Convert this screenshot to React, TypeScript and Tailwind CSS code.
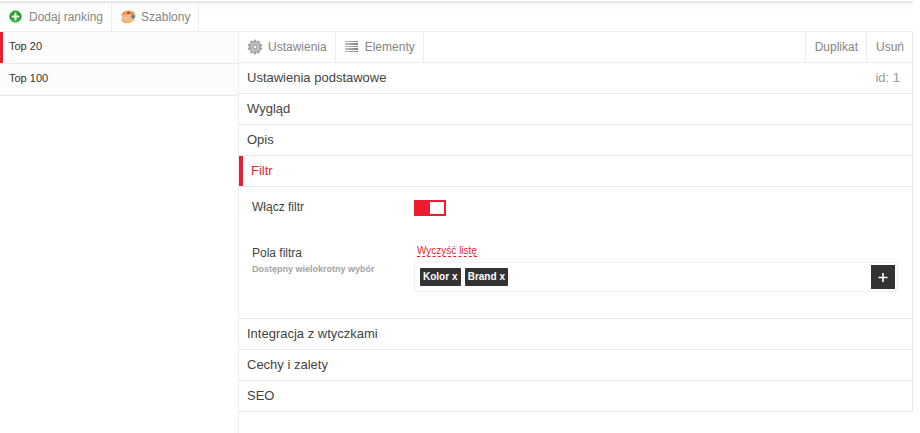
import React from 'react';

const rankings = ['Top 20', 'Top 100'];
const topSections = ['Ustawienia podstawowe', 'Wygląd', 'Opis'];
const bottomSections = ['Integracja z wtyczkami', 'Cechy i zalety', 'SEO'];

const AddIcon = () => (
  <svg className="h-4 w-4" viewBox="0 0 16 16" aria-hidden="true">
    <defs>
      <linearGradient id="add-fill" x1="0" y1="0" x2="0" y2="1">
        <stop offset="0" stopColor="#2ea83a" />
        <stop offset="0.5" stopColor="#149a22" />
        <stop offset="1" stopColor="#35c233" />
      </linearGradient>
    </defs>
    <circle cx="7.5" cy="7.5" r="5.800" fill="url(#add-fill)" stroke="#3f9b45" strokeWidth="0.7" />
    <path d="M7.5 4.500v6M4.500 7.500h6" stroke="#fff" strokeWidth="2" strokeLinecap="round" />
  </svg>
);

const PaletteIcon = () => (
  <svg className="h-4 w-4" viewBox="0 0 16 16" aria-hidden="true">
    <path
      d="M2 4.6C3.6 2 8.6 1.3 12 2.5c3 1.1 3.6 4.3 2.4 6.8-1.3 2.8-4.2 4.5-7.4 4.5-3.2 0-5.3-1.6-5.2-3.4.1-1.3 1.5-1.5 1.3-2.5C2.9 6.8.9 6.5 2 4.6z"
      fill="#f5b77c"
      stroke="#d4884f"
      strokeWidth="0.7"
    />
    <circle cx="6" cy="9.4" r="1.3" fill="#fff" stroke="#c98250" strokeWidth="0.5" />
    <ellipse cx="4.7" cy="4.8" rx="1.6" ry="1.2" fill="#f08a2c" />
    <ellipse cx="8.4" cy="3.9" rx="1.7" ry="1.3" fill="#e2342b" />
    <ellipse cx="12" cy="4.4" rx="1.3" ry="1.2" fill="#82a63b" />
    <circle cx="13" cy="7.6" r="1.8" fill="#3486c5" />
    <ellipse cx="10.6" cy="10.9" rx="1.6" ry="1.1" fill="#f5d13d" />
  </svg>
);

const teeth = [0, 36, 72, 108, 144, 180, 216, 252, 288, 324];

const GearIcon = () => (
  <svg className="h-4 w-4" viewBox="0 0 16 16" aria-hidden="true">
    {teeth.map((angle) => (
      <rect key={angle} x="7" y="1" width="2" height="3" rx="0.6" fill="#bbb" stroke="#858585" strokeWidth="0.7" transform={`rotate(${angle} 8 8)`} />
    ))}
    <circle cx="8" cy="8" r="4.9" fill="#c9c9c9" stroke="#919191" strokeWidth="0.8" />
    <circle cx="8" cy="8" r="2.1" fill="#fff" stroke="#858585" strokeWidth="1" />
  </svg>
);

const ListIcon = () => (
  <svg className="h-4 w-4" viewBox="0 0 16 16" aria-hidden="true">
    <defs>
      <linearGradient id="list-fill" x1="0" x2="1">
        <stop offset="0" stopColor="#c2c2c2" />
        <stop offset="1" stopColor="#7d7d7d" />
      </linearGradient>
    </defs>
    <path d="M1 2h13v1H1zM1 4h13v2H1zM1 7h13v1H1zM1 9h13v2H1zM1 12h13v1H1z" fill="url(#list-fill)" />
  </svg>
);

interface ToolProps {
  icon: React.ReactNode;
  label: string;
}

const ToolButton: React.FC<ToolProps> = ({ icon, label }) => (
  <button type="button" className="flex items-center gap-[5px] border-r border-[#ededed] px-2 text-xs text-[#858585]">
    {icon}
    {label}
  </button>
);

const SectionRow: React.FC<{ title: string; note?: string }> = ({ title, note }) => (
  <h3 className="border-b border-[#e6e6e6]">
    <button type="button" className="flex h-[30px] w-full items-center justify-between pr-3 pl-2 text-left text-[13px] text-[#444]">
      {title}
      {note && <span className="text-[#999]">{note}</span>}
    </button>
  </h3>
);

const Tag: React.FC<{ label: string }> = ({ label }) => (
  <button type="button" className="flex h-[18px] items-center gap-[3px] rounded-[1px] bg-[#333] px-[3px] text-[10px] font-bold text-white">
    {label} <span>x</span>
  </button>
);

const FilterPanel = () => (
  <div className="pt-3 pr-[14px] pb-[26px] pl-[13px] text-xs text-[#444]">
    <div className="flex h-[46px] items-start">
      <label htmlFor="filter-enabled" className="w-[162px] shrink-0 leading-4">
        Włącz filtr
      </label>
      <input
        id="filter-enabled"
        type="checkbox"
        defaultChecked
        className="mt-px flex h-4 w-8 appearance-none justify-end border-2 border-[#ed1c2e] bg-white before:w-[14px] before:bg-[#ed1c2e] before:content-[''] checked:justify-start"
      />
    </div>
    <div className="flex">
      <div className="w-[162px] shrink-0">
        <p className="leading-4">Pola filtra</p>
        <p className="text-[9px] leading-4 font-bold text-[#a3a3a3]">Dostępny wielokrotny wybór</p>
      </div>
      <div className="grow">
        <div className="flex h-[17px] pl-[3px]">
          <a href="#wyczysc" className="h-3 border-b border-dashed border-[#ed1c2e] text-[10px] leading-3 text-[#ed1c2e]">
            Wyczyść listę
          </a>
        </div>
        <div className="flex items-center gap-1 border border-[#f0f0f0] py-[2px] pr-[2px] pl-[5px]">
          <Tag label="Kolor" />
          <Tag label="Brand" />
          <button type="button" aria-label="Dodaj pole" className="ml-auto flex h-6 w-6 items-center justify-center bg-[#333]">
            <svg className="h-3 w-3" viewBox="0 0 12 12" aria-hidden="true">
              <path d="M6 2v9M1.5 6.500h9" stroke="#fff" strokeWidth="1.600" />
            </svg>
          </button>
        </div>
      </div>
    </div>
  </div>
);

export default function App() {
  return (
    <div className="flex min-h-screen flex-col bg-white pt-px pr-[7px] font-['Liberation_Sans',Arial,sans-serif]">
      <header className="flex h-[31px] border-t-2 border-b border-t-[#e8e8e8] border-b-[#f0f0f0] bg-linear-to-b from-[#f8f8f8] to-white to-30%">
        <ToolButton icon={<AddIcon />} label="Dodaj ranking" />
        <ToolButton icon={<PaletteIcon />} label="Szablony" />
      </header>
      <div className="flex grow">
        <nav className="w-[239px] shrink-0 border-r border-[#ededed]">
          {rankings.map((name, i) => (
            <a
              key={name}
              href="#ranking"
              className={`flex h-8 border-b border-[#e8e8e8] bg-[#fcfcfc] pt-2 pl-[9px] text-[11px] leading-3 text-[#333] ${i === 0 ? 'shadow-[inset_3px_0_#ed1c2e]' : ''}`}
            >
              {name}
            </a>
          ))}
        </nav>
        <main className="grow">
          <div className="border-r border-[#e6e6e6]">
            <div className="flex h-[31px] border-b border-[#ededed]">
              <ToolButton icon={<GearIcon />} label="Ustawienia" />
              <ToolButton icon={<ListIcon />} label="Elementy" />
              <div className="ml-auto flex text-xs text-[#858585]">
                <button type="button" className="border-l border-[#ededed] pr-2 pl-[9px]">Duplikat</button>
                <button type="button" className="border-l border-[#ededed] pr-2 pl-[9px]">Usuń</button>
              </div>
            </div>
            {topSections.map((title, i) => (
              <SectionRow key={title} title={title} note={i === 0 ? 'id: 1' : undefined} />
            ))}
            <h3 className="border-b border-[#e6e6e6]">
              <button type="button" className="flex h-[30px] w-full items-center border-l-4 border-[#ed1c2e] pl-2 text-[13px] text-[#ed1c2e]">
                Filtr
              </button>
            </h3>
            <FilterPanel />
            <div className="border-t border-[#e6e6e6]">
              {bottomSections.map((title) => (
                <SectionRow key={title} title={title} />
              ))}
            </div>
          </div>
        </main>
      </div>
    </div>
  );
}
